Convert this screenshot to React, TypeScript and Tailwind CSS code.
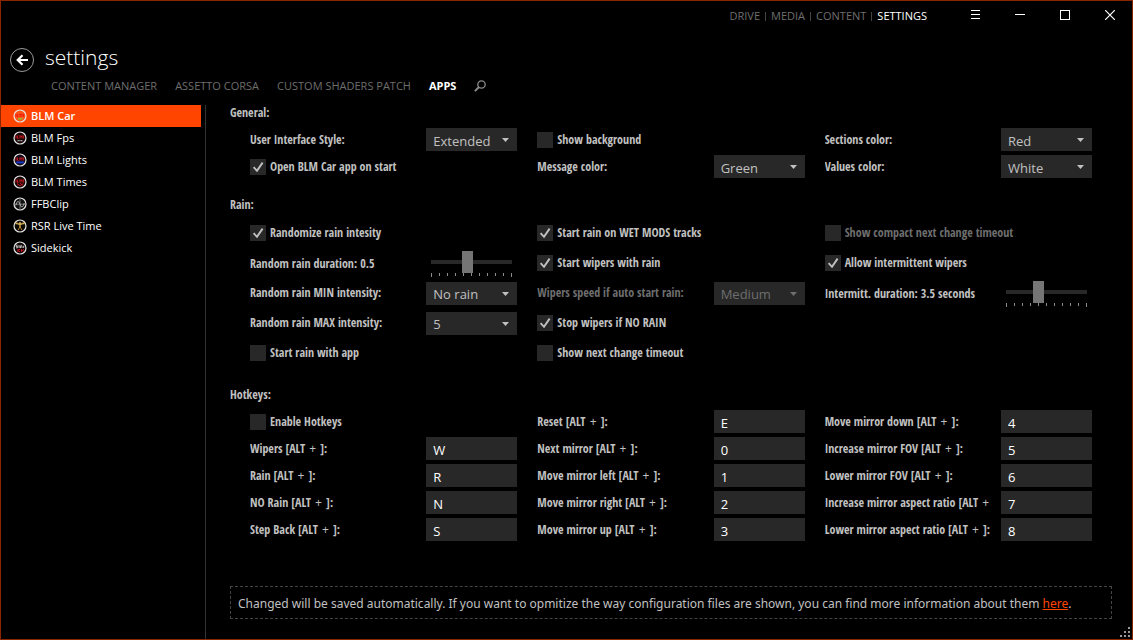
import { useState } from 'react';
import type { ReactNode } from 'react';

const columns = 'grid grid-cols-3 gap-x-5 px-5';
const labelText = "font-['Open_Sans_Condensed','Noto_Sans_Condensed','Liberation_Sans_Narrow','Open_Sans',sans-serif] text-[12px] leading-4 font-bold";
const field = 'h-[23px] w-full appearance-none rounded-none border-0 bg-[#282828] px-[7px] pt-[2px] text-[13px] leading-5 outline-none';

type RowProps = { id: string; label: ReactNode; children: ReactNode; disabled?: boolean; tall?: boolean; lowered?: boolean };

function Row({ id, label, children, disabled, tall, lowered }: RowProps) {
  return (
    <div className={`flex items-center ${tall ? 'h-[30px]' : 'h-[27px]'} ${lowered ? 'pt-[2px]' : ''}`}>
      <label
        htmlFor={id}
        className={`${labelText} mr-2 min-w-0 flex-1 overflow-hidden whitespace-nowrap ${disabled ? 'text-[#6e6e6e]' : 'text-[#c1c1c1]'}`}
      >
        {label}
      </label>
      <div className="w-[91px] shrink-0">{children}</div>
    </div>
  );
}

type ChoiceProps = { id: string; label: string; options: string[]; disabled?: boolean; tall?: boolean };

function Choice({ id, label, options, disabled, tall }: ChoiceProps) {
  return (
    <Row id={id} label={label} disabled={disabled} tall={tall}>
      <div className={`relative ${disabled ? 'text-[#6e6e6e]' : 'text-[#c1c1c1]'}`}>
        <select id={id} disabled={disabled} className={`${field} block opacity-100`}>
          {options.map((o) => (
            <option key={o}>{o}</option>
          ))}
        </select>
        <svg className="pointer-events-none absolute top-[10px] right-2 h-1 w-[7px]" viewBox="0 0 7 4" fill="currentColor">
          <path d="M0 0h7L3.5 4z" />
        </svg>
      </div>
    </Row>
  );
}

type TickProps = { label: string; checked?: boolean; disabled?: boolean; tall?: boolean };

function Tick({ label, checked, disabled, tall }: TickProps) {
  const [on, setOn] = useState(!!checked);
  return (
    <div className={`flex items-center ${tall ? 'h-[30px]' : 'h-[27px]'}`}>
      <label className={`flex items-center gap-1 whitespace-nowrap ${disabled ? 'text-[#6e6e6e]' : 'text-[#c1c1c1]'}`}>
        <span className="relative block size-4">
          <input
            type="checkbox"
            checked={on}
            disabled={disabled}
            onChange={(e) => setOn(e.target.checked)}
            className="block size-4 appearance-none bg-[#282828]"
          />
          {on && (
            <svg className="pointer-events-none absolute inset-0 size-4" viewBox="0 0 16 16" fill="none" stroke="currentColor" strokeWidth="1.9">
              <path d="M3.6 8.2 7 11.8 12.6 3.6" />
            </svg>
          )}
        </span>
        <span className={labelText}>{label}</span>
      </label>
    </div>
  );
}

type SliderProps = { id: string; text: string; unit?: string; value: number; min: number; max: number };

function Slider({ id, text, unit = '', value, min, max }: SliderProps) {
  const [v, setV] = useState(value);
  return (
    <Row id={id} label={`${text}: ${v}${unit}`} tall lowered>
      <div className="px-[5px]">
        <input
          id={id}
          type="range"
          min={min}
          max={max}
          step={0.1}
          value={v}
          onChange={(e) => setV(Number(e.target.value))}
          className="block h-[22px] w-full appearance-none bg-transparent [&::-webkit-slider-runnable-track]:h-1 [&::-webkit-slider-runnable-track]:bg-[#282828] [&::-webkit-slider-thumb]:-mt-[9px] [&::-webkit-slider-thumb]:h-[22px] [&::-webkit-slider-thumb]:w-[11px] [&::-webkit-slider-thumb]:appearance-none [&::-webkit-slider-thumb]:bg-[#757575]"
        />
        <svg className="block h-1 w-full" viewBox="0 0 81 4" fill="#8a8a8a" shapeRendering="crispEdges">
          {[0, 1, 2, 3, 4, 5, 6, 7, 8, 9, 10].map((i) => (
            <rect key={i} x={i * 8} y="0" width="1" height={i % 10 ? 3 : 4} />
          ))}
        </svg>
      </div>
    </Row>
  );
}

function Key({ id, label, value }: { id: string; label: string; value: string }) {
  const text = (
    <>
      {label} [ALT<span className="mx-px font-['Open_Sans',sans-serif] font-normal"> + </span>]:
    </>
  );
  return (
    <Row id={id} label={text}>
      <input id={id} type="text" defaultValue={value} className={`${field} block text-white`} />
    </Row>
  );
}

function Section({ title, loose, children }: { title: string; loose?: boolean; children: ReactNode }) {
  return (
    <section className={loose ? 'pb-[2px]' : ''}>
      <h2 className={`${labelText} flex h-[26px] items-center text-[#c1c1c1]`}>{title}</h2>
      <div className={columns}>{children}</div>
    </section>
  );
}

function Badge({ fill, children }: { fill: string; children: ReactNode }) {
  return (
    <svg className="size-[14px] shrink-0" viewBox="0 0 14 14" fill="none">
      <circle cx="7" cy="7" r="6" fill={fill} stroke="#e4e4e4" strokeWidth="1.2" />
      {children}
    </svg>
  );
}

const redWord = <path d="M3 4.5v3M4.6 4.5v3h1M7 7.5v-3l1 1.5 1-1.5v3M10.6 4.5v3" stroke="#c3161c" strokeWidth="1" />;

const apps: { name: string; icon: ReactNode }[] = [
  {
    name: 'BLM Car',
    icon: (
      <Badge fill="#ff5518">
        <path d="M3 4.8v3M4.6 4.8v3h1M7 7.8v-3l1 1.5 1-1.500v3M10.600 4.800v3" stroke="#ec1a10" strokeWidth="1" />
        <path d="M5 9.800h4.400" stroke="#9cb52a" strokeWidth="1.800" />
      </Badge>
    ),
  },
  {
    name: 'BLM Fps',
    icon: (
      <Badge fill="#180808">
        {redWord}
        <path d="M4.5 9.6h5" stroke="#b8b8b8" strokeWidth="1.4" strokeDasharray="1.3 .5" />
      </Badge>
    ),
  },
  {
    name: 'BLM Lights',
    icon: (
      <Badge fill="#140a18">
        {redWord}
        <path d="M3.2 9.4h7.6" stroke="#1539c9" strokeWidth="2" />
      </Badge>
    ),
  },
  {
    name: 'BLM Times',
    icon: (
      <Badge fill="#180808">
        {redWord}
        <path d="M4 8.6l3 2.2M7 8.4l3.2 2M10 8.4 7.4 11" stroke="#c3161c" strokeWidth="1" />
      </Badge>
    ),
  },
  {
    name: 'FFBClip',
    icon: (
      <Badge fill="#101010">
        <path d="M7 1.5v11M1.5 7.2h11" stroke="#8c8c8c" strokeWidth=".8" />
        <path d="M2.8 8.4c1.4-5 2.8-5 4.200-1.200 1.400 3.800 2.600 3.800 4.200-1" stroke="#d0d0d0" strokeWidth=".8" />
      </Badge>
    ),
  },
  {
    name: 'RSR Live Time',
    icon: (
      <Badge fill="#0c0a04">
        <path d="M2.4 3.600h2.200v1.600H2.400zM9.400 3.600h2.200v1.600H9.400z" fill="#d8b25a" />
        <path d="M4.400 4.600 7 5.400l2.600-.8M7 3v5" stroke="#d8b25a" strokeWidth="1.400" />
        <path d="M7 7.600 5.200 11M7 7.600 8.800 11" stroke="#a97c2c" strokeWidth="1" />
      </Badge>
    ),
  },
  {
    name: 'Sidekick',
    icon: (
      <Badge fill="#0c0606">
        <path d="M4.600 4.200H3.200v1.300h1.400v1.300H3M6 4v2.800M8.200 3.800v2.800H7V5.200h1.200M9.400 6.400h1.400V5.200H9.600" stroke="#e4e4e4" strokeWidth=".8" />
        <path d="M5 7.900v3M7 8 5.400 9.400 7 10.900M8.400 8v2.800M11 8.200 9.600 9.400l1.200 1.200" stroke="#e0141c" strokeWidth="1" />
      </Badge>
    ),
  },
];

function TitleBar() {
  const win = 'flex h-[30px] w-[45px] items-center justify-center pb-[2px] text-white';
  return (
    <header className="flex items-center justify-end">
      <nav className="mr-[25px] flex items-center text-[11px] leading-4 text-[#6e6e6e]">
        {['DRIVE', 'MEDIA', 'CONTENT'].map((t) => (
          <span key={t} className="flex items-center">
            <a href="#">{t}</a>
            <span className="mx-[5px] h-[9px] w-px bg-[#444]" />
          </span>
        ))}
        <a href="#" className="text-white">SETTINGS</a>
      </nav>
      <button aria-label="Menu" className={win}>
        <svg className="size-[10px]" viewBox="0 0 10 10" fill="currentColor" shapeRendering="crispEdges">
          <path d="M1 0h9v1H1zM1 4h9v1H1zM1 8h9v1H1z" />
        </svg>
      </button>
      <button aria-label="Minimize" className={win}>
        <svg className="size-[10px]" viewBox="0 0 10 10" fill="currentColor" shapeRendering="crispEdges">
          <path d="M0 4h10v1H0z" />
        </svg>
      </button>
      <button aria-label="Maximize" className={win}>
        <svg className="size-[10px]" viewBox="0 0 10 10" fill="none" stroke="currentColor" shapeRendering="crispEdges">
          <path d="M.5.5h9v9h-9z" />
        </svg>
      </button>
      <button aria-label="Close" className={win}>
        <svg className="size-[10px]" viewBox="0 0 10 10" fill="none" stroke="currentColor" strokeWidth="1.2">
          <path d="m0 0 10 10M10 0 0 10" />
        </svg>
      </button>
    </header>
  );
}

export default function App() {
  return (
    <div className="relative flex min-h-screen w-full flex-col border border-[#8c2600] bg-black font-['Open_Sans','Noto_Sans',sans-serif]">
      <TitleBar />
      <div className="mt-3 flex h-[34px] items-start gap-[11px] pl-[9px] text-white">
        <button aria-label="Back" className="mt-[5px] flex size-6 items-center justify-center rounded-full border border-[#9a9a9a]">
          <svg className="h-3 w-[14px]" viewBox="0 0 14 12" fill="none" stroke="currentColor" strokeWidth="2.2">
            <path d="M13 6H3M7.5 1.2 2.7 6l4.8 4.8" />
          </svg>
        </button>
        <h1 className="text-[21px] leading-7 font-light">settings</h1>
      </div>
      <nav className="flex h-[18px] items-center gap-[18px] pl-[50px] text-[11px] leading-4 text-[#6e6e6e]">
        <a href="#">CONTENT MANAGER</a>
        <a href="#">ASSETTO CORSA</a>
        <a href="#">CUSTOM SHADERS PATCH</a>
        <a href="#" className="font-bold text-white">APPS</a>
        <button aria-label="Search">
          <svg className="size-3" viewBox="0 0 12 12" fill="none" stroke="#8a8a8a">
            <circle cx="7.5" cy="4.5" r="3.7" strokeWidth="1.3" />
            <path d="M5 7 .9 11.1" strokeWidth="2" />
          </svg>
        </button>
      </nav>
      <div className="mt-[10px] flex flex-1">
        <ul className="w-[200px] shrink-0 text-[11px] leading-4 text-white">
          {apps.map((app, i) => (
            <li key={app.name}>
              <a href="#" className={`flex h-[22px] items-center gap-1 pl-3 ${i === 0 ? 'bg-[#ff4500] font-semibold' : 'font-medium'}`}>
                {app.icon}
                {app.name}
              </a>
            </li>
          ))}
        </ul>
        <main className="ml-1 flex min-w-0 flex-1 flex-col border-l border-[#333] pr-5 pl-6">
          <div className="-mt-[5px] flex flex-col gap-3">
            <Section title="General:">
              <div>
                <Choice id="style" label="User Interface Style:" options={['Extended', 'Compact']} />
                <Tick label="Open BLM Car app on start" checked />
              </div>
              <div>
                <Tick label="Show background" />
                <Choice id="message" label="Message color:" options={['Green', 'Red', 'White']} />
              </div>
              <div>
                <Choice id="sections" label="Sections color:" options={['Red', 'Green', 'White']} />
                <Choice id="values" label="Values color:" options={['White', 'Red', 'Green']} />
              </div>
            </Section>
            <Section title="Rain:" loose>
              <div>
                <Tick tall label="Randomize rain intesity" checked />
                <Slider id="duration" text="Random rain duration" value={0.5} min={0.1} max={1} />
                <Choice tall id="min" label="Random rain MIN intensity:" options={['No rain', '1', '2', '3', '4', '5']} />
                <Choice tall id="max" label="Random rain MAX intensity:" options={['5', '4', '3', '2', '1']} />
                <Tick tall label="Start rain with app" />
              </div>
              <div>
                <Tick tall label="Start rain on WET MODS tracks" checked />
                <Tick tall label="Start wipers with rain" checked />
                <Choice tall id="speed" label="Wipers speed if auto start rain:" options={['Medium', 'Slow', 'Fast']} disabled />
                <Tick tall label="Stop wipers if NO RAIN" checked />
                <Tick tall label="Show next change timeout" />
              </div>
              <div>
                <Tick tall label="Show compact next change timeout" disabled />
                <Tick tall label="Allow intermittent wipers" checked />
                <Slider id="interval" text="Intermitt. duration" unit=" seconds" value={3.5} min={1} max={7.5} />
              </div>
            </Section>
            <Section title="Hotkeys:">
              <div>
                <Tick label="Enable Hotkeys" />
                <Key id="wipers" label="Wipers" value="W" />
                <Key id="rain" label="Rain" value="R" />
                <Key id="norain" label="NO Rain" value="N" />
                <Key id="back" label="Step Back" value="S" />
              </div>
              <div>
                <Key id="reset" label="Reset" value="E" />
                <Key id="next" label="Next mirror" value="0" />
                <Key id="left" label="Move mirror left" value="1" />
                <Key id="right" label="Move mirror right" value="2" />
                <Key id="up" label="Move mirror up" value="3" />
              </div>
              <div>
                <Key id="down" label="Move mirror down" value="4" />
                <Key id="fovup" label="Increase mirror FOV" value="5" />
                <Key id="fovdown" label="Lower mirror FOV" value="6" />
                <Key id="ratioup" label="Increase mirror aspect ratio" value="7" />
                <Key id="ratiodown" label="Lower mirror aspect ratio" value="8" />
              </div>
            </Section>
          </div>
          <p className="mt-auto mb-5 border border-dashed border-[#444] px-[7px] pt-2 pb-[6px] font-['Noto_Sans','Open_Sans',sans-serif] text-[12px] leading-[17px] text-[#c1c1c1]">
            Changed will be saved automatically. If you want to opmitize the way configuration files are shown, you can find more
            information about them <a href="#" className="text-[#ff4500] underline">here</a>.
          </p>
        </main>
      </div>
      <svg className="absolute right-[2px] bottom-[2px] size-[10px]" viewBox="0 0 10 10" fill="#999" shapeRendering="crispEdges">
        <path d="M8 0h2v2H8zM8 4h2v2H8zM8 8h2v2H8zM4 4h2v2H4zM4 8h2v2H4zM0 8h2v2H0z" />
      </svg>
    </div>
  );
}
